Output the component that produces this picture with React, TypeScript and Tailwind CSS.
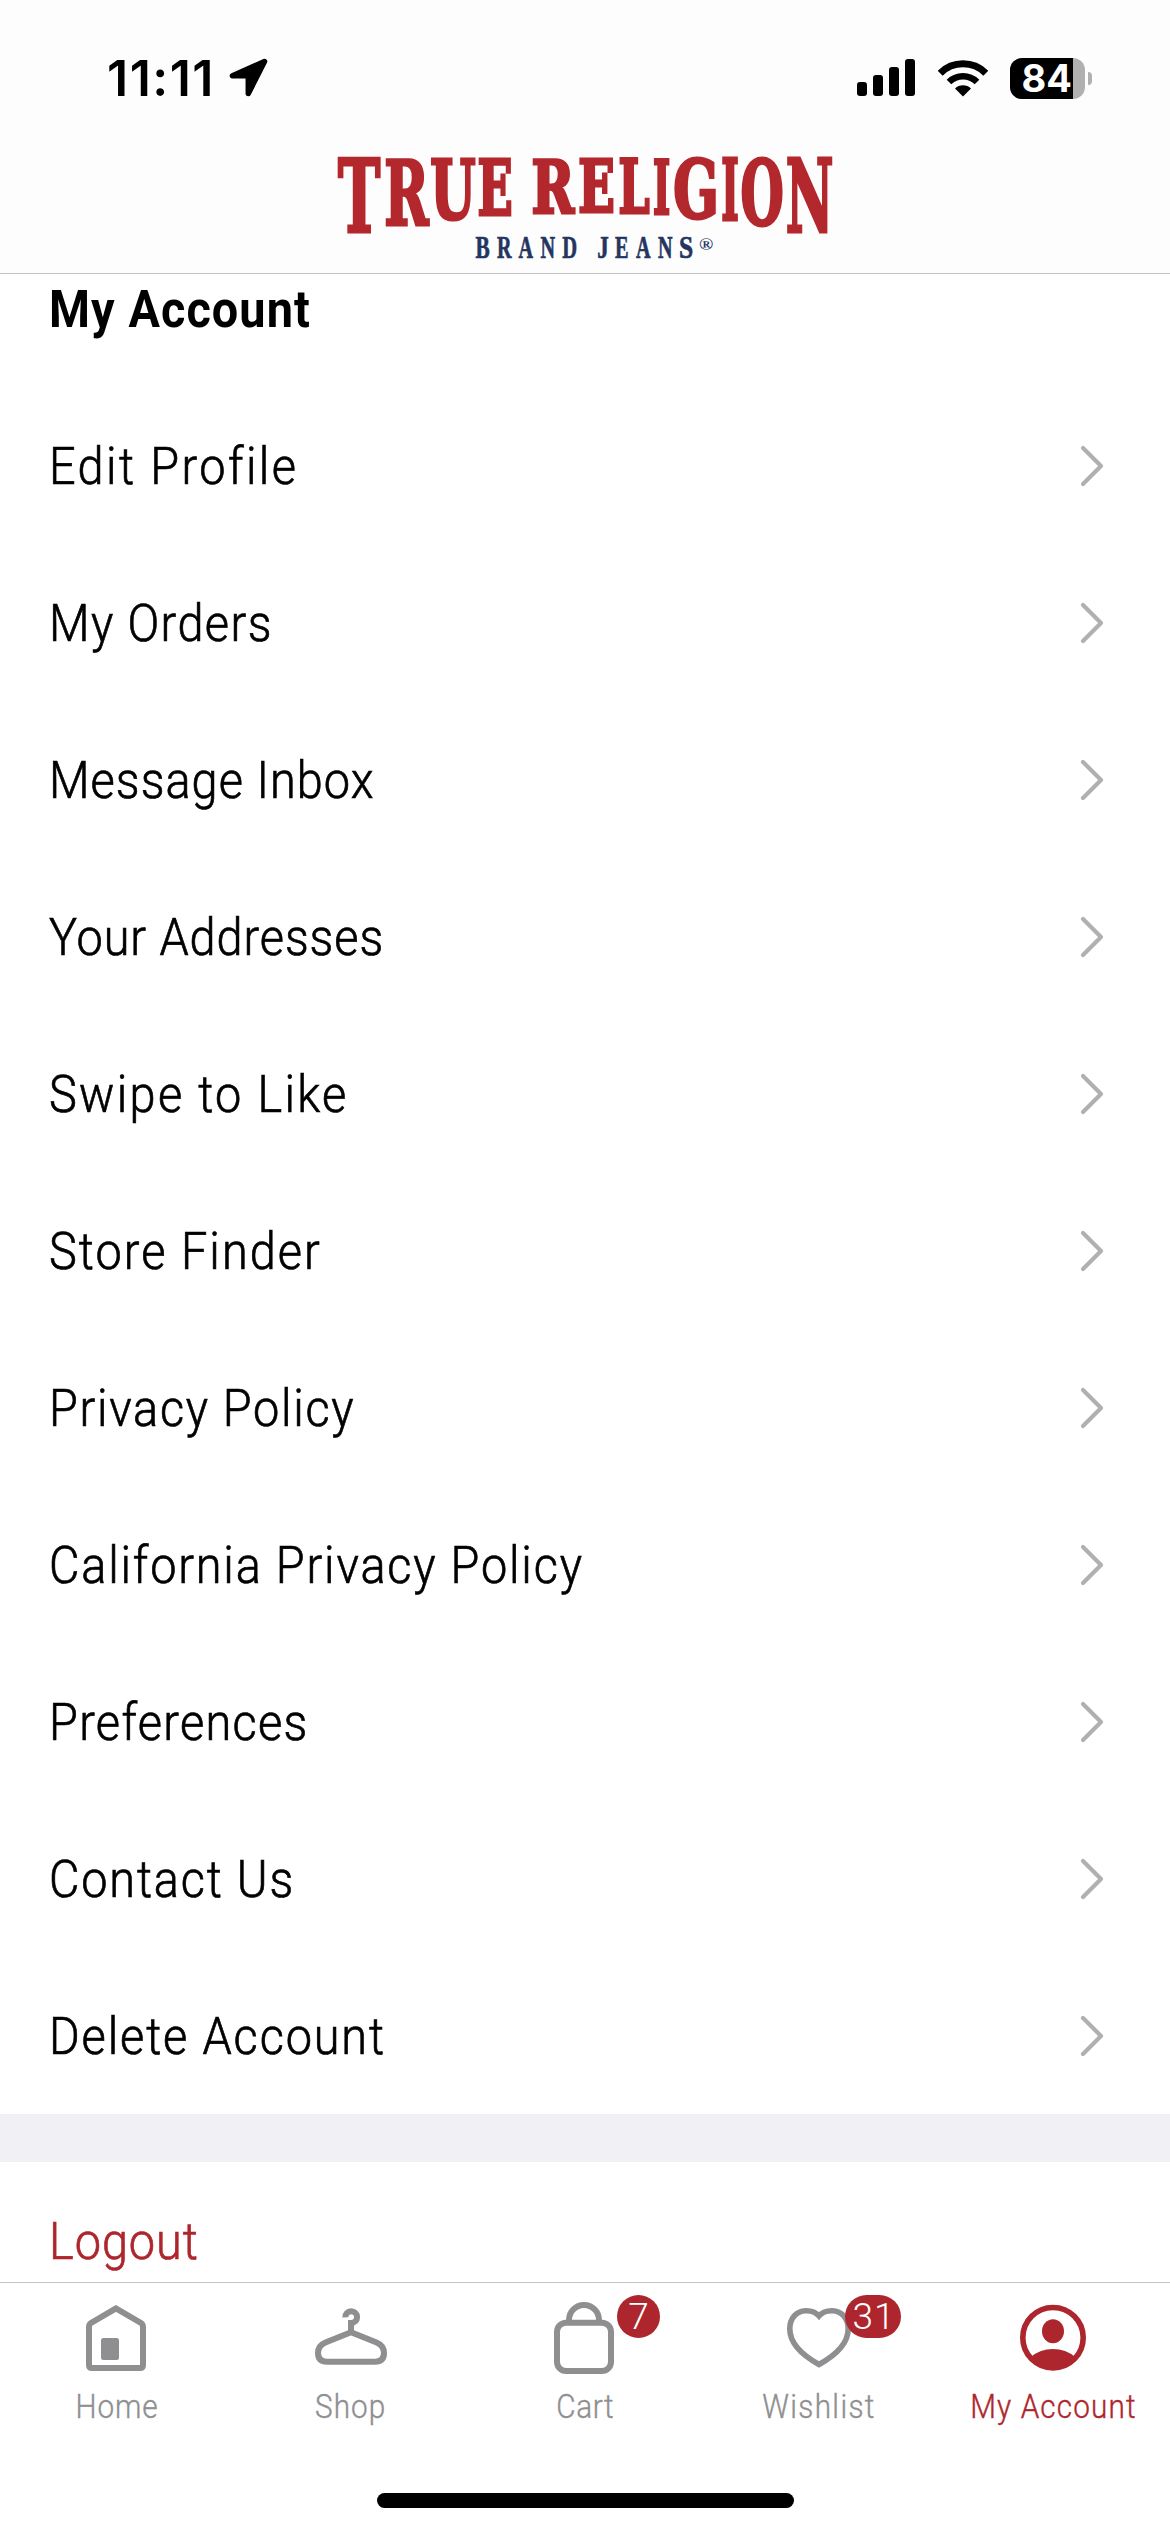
import React from 'react';

interface MenuItem {
  label: string;
  className: string;
}

const menuItems: MenuItem[] = [
  { label: 'Edit Profile', className: 'tracking-[2.7px]' },
  { label: 'My Orders', className: 'tracking-[1.6px]' },
  { label: 'Message Inbox', className: 'tracking-[1.2px]' },
  { label: 'Your Addresses', className: 'tracking-[1.05px]' },
  { label: 'Swipe to Like', className: 'tracking-[2.6px]' },
  { label: 'Store Finder', className: 'tracking-[2.3px]' },
  { label: 'Privacy Policy', className: 'tracking-[1.9px]' },
  { label: 'California Privacy Policy', className: 'tracking-[2.03px]' },
  { label: 'Preferences', className: 'tracking-[1.5px]' },
  { label: 'Contact Us', className: 'tracking-[2.05px]' },
  { label: 'Delete Account', className: 'tracking-[2.1px]' },
];

// x, width and baseline of each letter of the arched wordmark
const wordmark = [
  { char: 'T', x: 53, width: 125, base: 275 },
  { char: 'R', x: 190, width: 131, base: 254 },
  { char: 'U', x: 326, width: 134, base: 238 },
  { char: 'E', x: 466, width: 104, base: 226 },
  { char: 'R', x: 626, width: 126, base: 218 },
  { char: 'E', x: 764, width: 108, base: 216 },
  { char: 'L', x: 883, width: 92, base: 219 },
  { char: 'I', x: 985, width: 51, base: 222 },
  { char: 'G', x: 1045, width: 135, base: 234 },
  { char: 'I', x: 1187, width: 52, base: 241 },
  { char: 'O', x: 1244, width: 128, base: 254 },
  { char: 'N', x: 1378, width: 141, base: 275 },
];

const tagline = [
  { char: 'B', x: 460, width: 42 },
  { char: 'R', x: 524, width: 43 },
  { char: 'A', x: 587, width: 43 },
  { char: 'N', x: 652, width: 43 },
  { char: 'D', x: 717, width: 44 },
  { char: 'J', x: 820, width: 34 },
  { char: 'E', x: 873, width: 40 },
  { char: 'A', x: 935, width: 43 },
  { char: 'N', x: 1000, width: 43 },
  { char: 'S', x: 1062, width: 42 },
];

function BrandLogo() {
  return (
    <svg
      viewBox="0 0 1568 414"
      className="h-[140px] w-[530px] shrink-0 overflow-visible font-bold"
      role="img"
      aria-label="True Religion Brand Jeans"
    >
      <g
        className="font-['DejaVu_Serif_Condensed','DejaVu_Serif',serif]"
        fill="#b3282d"
        stroke="#b3282d"
        strokeWidth={9}
      >
        {wordmark.map((l, i) => (
          <text
            key={i}
            x={l.x}
            y={l.base - 3}
            fontSize={(l.base - 59) / 0.729}
            textLength={l.width}
            lengthAdjust="spacingAndGlyphs"
          >
            {l.char}
          </text>
        ))}
      </g>
      <g className="font-['Liberation_Serif',serif]" fill="#24355f" stroke="#24355f" strokeWidth={2}>
        {tagline.map((l, i) => (
          <text key={i} x={l.x} y={348} fontSize={91} textLength={l.width} lengthAdjust="spacingAndGlyphs">
            {l.char}
          </text>
        ))}
      </g>
      <text
        x={1121}
        y={324}
        fontSize={52}
        fill="#24355f"
        textLength={42}
        lengthAdjust="spacingAndGlyphs"
        className="font-['Liberation_Serif',serif]"
      >
        ®
      </text>
    </svg>
  );
}

function StatusBar() {
  return (
    <div className="flex h-[140px] items-start justify-between pt-[54px] pr-[78px] pl-[107px]">
      <div className="flex h-12 items-center">
        <span className="font-['Inter',sans-serif] text-[50px] leading-[48px] font-semibold tracking-[1.5px]">11:11</span>
        <svg viewBox="0 0 40 40" className="ml-[14px] h-10 w-10">
          <path
            d="M35.5 3.5 L3.5 17.8 H19.3 V35.5 Z"
            fill="black"
            stroke="black"
            strokeWidth={5.5}
            strokeLinejoin="round"
          />
        </svg>
      </div>
      <div className="flex h-12 items-center">
        <svg viewBox="0 0 58 38" className="h-[38px] w-[58px]">
          <rect x="0" y="23" width="10" height="14" rx="3" />
          <rect x="16" y="16" width="10" height="21" rx="3" />
          <rect x="32" y="8" width="10" height="29" rx="3" />
          <rect x="48" y="0" width="10" height="37" rx="3" />
        </svg>
        <svg viewBox="0 0 52 38" className="ml-[22px] h-[38px] w-[52px]">
          <path d="M3.2 14.2 A32.5 32.5 0 0 1 48.8 14.2" fill="none" stroke="black" strokeWidth={7} />
          <path d="M12 23 A20 20 0 0 1 40 23" fill="none" stroke="black" strokeWidth={6.6} />
          <path d="M18 29.5 A11.5 11.5 0 0 1 34 29.5 L26 37.5 Z" />
        </svg>
        <div className="ml-[21px] flex h-[41px] w-[75px] rounded-[12px] bg-[#b0b0b0]">
          <div className="flex w-[63px] items-center justify-end rounded-l-[12px] bg-black pr-[1px] font-['Inter',sans-serif] text-[38px] leading-[41px] font-bold text-white">
            84
          </div>
        </div>
        <div className="ml-[3px] h-[13px] w-[4px] rounded-r-full bg-[#b0b0b0]" />
      </div>
    </div>
  );
}

function Chevron() {
  return (
    <svg viewBox="0 0 24 42" className="h-[42px] w-6" fill="none" stroke="#b0b0b0" strokeWidth={4.2}>
      <path d="M3 3 L21 21 L3 39" strokeLinecap="round" strokeLinejoin="round" />
    </svg>
  );
}

function HomeIcon() {
  return (
    <svg viewBox="0 0 80 85" className="h-[85px] w-20" fill="none" stroke="currentColor" strokeWidth={6}>
      <path d="M39 13.4 L14 28 Q12 29.3 12 32 V70 Q12 73 15 73 H63 Q66 73 66 70 V32 Q66 29.3 64 28 Z" />
      <rect x="24" y="43" width="18" height="22" rx="2.5" fill="currentColor" stroke="none" />
    </svg>
  );
}

function ShopIcon() {
  return (
    <svg viewBox="0 0 80 85" className="h-[85px] w-20" fill="none" stroke="currentColor" strokeWidth={6}>
      <path d="M34.3 22.4 A5.9 5.9 0 1 1 40 28 V37" />
      <path
        d="M40 37.3 L15 47.3 Q7 50.5 7 58 Q7 66.7 16 66.7 H64 Q73 66.7 73 58 Q73 50.5 65 47.3 Z"
        strokeLinejoin="round"
      />
    </svg>
  );
}

function CartIcon() {
  return (
    <svg viewBox="0 0 80 85" className="h-[85px] w-20" fill="none" stroke="currentColor" strokeWidth={6}>
      <rect x="12" y="27.7" width="54" height="48.3" rx="9" />
      <path d="M24 26 V25 A15 15 0 0 1 54 25 V26" />
    </svg>
  );
}

function WishlistIcon() {
  return (
    <svg viewBox="0 0 80 85" className="h-[85px] w-20" fill="none" stroke="currentColor" strokeWidth={5.6}>
      <path d="M40 21 C36 16.5 31 15.6 26.5 15.8 C17.5 16.2 10.8 23 10.8 34 C10.8 49 23 60 40 69.5 C57 60 69.2 49 69.2 34 C69.2 23 62.5 16.2 53.5 15.8 C49 15.6 44 16.5 40 21 Z" />
    </svg>
  );
}

function AccountIcon() {
  return (
    <svg viewBox="0 0 80 85" className="h-[85px] w-20" fill="currentColor">
      <circle cx="40" cy="42.7" r="30.2" fill="none" stroke="currentColor" strokeWidth={5.6} />
      <ellipse cx="40" cy="36.3" rx="11" ry="12" />
      <path d="M18 62 Q27 54 40 54 Q53 54 62 62 A30.2 30.2 0 0 1 18 62 Z" />
    </svg>
  );
}

interface TabProps {
  label: string;
  icon: React.ReactNode;
  labelClass: string;
  active?: boolean;
  badge?: React.ReactNode;
}

function Tab({ label, icon, labelClass, active, badge }: TabProps) {
  return (
    <button
      className={`flex flex-1 flex-col items-center pt-[12px] ${active ? 'text-[#ae262d]' : 'text-[#8f8f91]'}`}
    >
      <span className="relative">
        {icon}
        {badge}
      </span>
      <span
        className={`mt-[7px] scale-x-90 text-[33px] leading-[40px] font-light whitespace-nowrap [-webkit-text-stroke:0.4px] ${labelClass}`}
      >
        {label}
      </span>
    </button>
  );
}

export default function App() {
  return (
    <div className="flex h-[2532px] w-[1170px] flex-col overflow-hidden bg-white font-['Roboto','Liberation_Sans',sans-serif] text-black">
      <header className="flex h-[274px] shrink-0 flex-col items-center border-b border-[#c4c4c4] bg-[#fdfdfd]">
        <div className="w-full">
          <StatusBar />
        </div>
        <BrandLogo />
      </header>

      <main className="min-h-0 flex-1 overflow-hidden">
        <h1 className="flex h-[113px] items-start pt-[6px] pl-[49px] text-[52px] leading-[60px] font-bold">
          <span className="origin-left scale-x-90 tracking-[1.2px]">My Account</span>
        </h1>
        <ul>
          {menuItems.map((item) => (
            <li key={item.label} className="flex h-[157px] items-center justify-between pr-[66px] pl-[49px]">
              <span
                className={`origin-left scale-x-90 pt-[2px] text-[52px] leading-[60px] font-light [-webkit-text-stroke:0.7px] ${item.className}`}
              >
                {item.label}
              </span>
              <Chevron />
            </li>
          ))}
        </ul>
        <div className="h-12 bg-[#f0f0f5]" />
        <div className="flex h-[157px] items-center pl-[49px] text-[52px] leading-[60px] font-light text-[#ae262d]">
          <span className="origin-left scale-x-90 pt-[2px] tracking-[1.1px] [-webkit-text-stroke:0.7px]">Logout</span>
        </div>
      </main>

      <nav className="flex h-[250px] shrink-0 flex-col items-center border-t border-[#c4c4c4] bg-white">
        <div className="flex w-full flex-1">
          <Tab label="Home" icon={<HomeIcon />} labelClass="tracking-[1px]" />
          <Tab label="Shop" icon={<ShopIcon />} labelClass="tracking-[1.2px]" />
          <Tab
            label="Cart"
            icon={<CartIcon />}
            labelClass="tracking-[0.7px]"
            badge={
              <span className="absolute top-0 left-[72px] flex h-[43px] w-[43px] items-center justify-center rounded-full bg-[#ae262d] text-[37px] leading-none font-light text-white">
                7
              </span>
            }
          />
          <Tab
            label="Wishlist"
            icon={<WishlistIcon />}
            labelClass="tracking-[1.5px]"
            badge={
              <span className="absolute top-0 left-[66px] flex h-[43px] w-[56px] items-center justify-center rounded-full bg-[#ae262d] pl-[2px] text-[37px] leading-none font-light tracking-[1px] text-white">
                31
              </span>
            }
          />
          <Tab label="My Account" icon={<AccountIcon />} labelClass="tracking-[1.25px]" active />
        </div>
        <div className="mb-[24px] h-[15px] w-[417px] rounded-full bg-black" />
      </nav>
    </div>
  );
}
